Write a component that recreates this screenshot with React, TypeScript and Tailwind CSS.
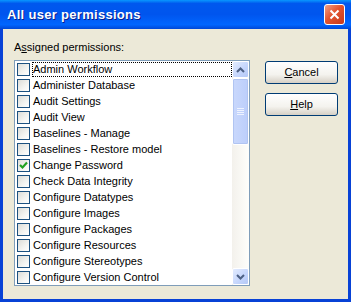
import { type ReactNode } from 'react';

const permissions = [
    'Admin Workflow',
    'Administer Database',
    'Audit Settings',
    'Audit View',
    'Baselines - Manage',
    'Baselines - Restore model',
    'Change Password',
    'Check Data Integrity',
    'Configure Datatypes',
    'Configure Images',
    'Configure Packages',
    'Configure Resources',
    'Configure Stereotypes',
    'Configure Version Control',
];

const checked = ['Change Password'];

// XP style checkbox
const CheckBox = ({ on }: { on: boolean }) => (
    <div className="w-[13px] h-[13px] shrink-0 border border-[#1c5180] bg-[linear-gradient(135deg,#dcdcd7_0%,#f4f4f1_60%,#ffffff_100%)] flex items-center justify-center">
        {on && (
            <svg width="9" height="9" viewBox="0 0 9 9">
                <path d="M1 4 L3.5 6.5 L8 1.5" fill="none" stroke="#21a121" strokeWidth="2.2" />
            </svg>
        )}
    </div>
);

const XpButton = ({ children }: { children: ReactNode }) => (
    <div className="w-[73px] h-[23px] rounded-[3px] border border-[#003c74] bg-[linear-gradient(to_bottom,#ffffff_0%,#f4f3ee_60%,#d6d0c5_100%)] flex items-center justify-center text-[11px] text-black">
        {children}
    </div>
);

const ScrollArrow = ({ up }: { up: boolean }) => (
    <div className="w-[17px] h-[17px] rounded-[2px] border border-white bg-[linear-gradient(135deg,#e2ebfe_0%,#c4d5fc_60%,#b4c8f6_100%)] flex items-center justify-center">
        <svg width="9" height="6" viewBox="0 0 9 6">
            <path d={up ? 'M1 5 L4.5 1.5 L8 5' : 'M1 1 L4.5 4.5 L8 1'} fill="none" stroke="#4d6185" strokeWidth="2" />
        </svg>
    </div>
);

export default function App() {
    return (
        <div className="w-[351px] h-[302px] flex flex-col bg-[#0842d6] font-['Liberation_Sans',Arial,sans-serif]">
            {/* title bar */}
            <div className="h-[29px] shrink-0 flex items-center justify-between pl-[7px] pr-[6px] bg-[linear-gradient(to_bottom,#0997ff_0%,#0058ee_12%,#0055ee_50%,#0066ff_85%,#0047d6_100%)]">
                <span className="text-white font-bold text-[13px] tracking-[0.3px] [text-shadow:1px_1px_0_#0a1e8c]">
                    All user permissions
                </span>
                <div className="w-[21px] h-[21px] rounded-[3px] border border-white bg-[linear-gradient(135deg,#f0a088_0%,#e2542f_45%,#c8381a_100%)] flex items-center justify-center">
                    <svg width="11" height="11" viewBox="0 0 11 11">
                        <path d="M1.5 1.5 L9.5 9.5 M9.5 1.5 L1.5 9.5" stroke="white" strokeWidth="2" />
                    </svg>
                </div>
            </div>

            {/* client area */}
            <div className="flex-1 mx-[3px] mb-[3px] bg-[#ece9d8] flex text-[11px] text-black">
                <div className="pl-[11px] pt-[12px] flex flex-col">
                    <div className="h-[13px] leading-[13px]">
                        A<span className="underline">s</span>signed permissions:
                    </div>
                    <div className="mt-[6px] w-[236px] h-[226px] border border-[#7f9db9] bg-white flex">
                        <div className="flex-1 flex flex-col">
                            {permissions.map((p, i) => (
                                <div key={p} className="h-[16px] flex items-center pl-[2px] gap-[2px]">
                                    <CheckBox on={checked.includes(p)} />
                                    <span
                                        className={
                                            i === 0
                                                ? 'flex-1 h-[15px] leading-[13px] border border-dotted border-black whitespace-nowrap'
                                                : 'flex-1 leading-[15px] pl-[1px] whitespace-nowrap overflow-hidden'
                                        }
                                    >
                                        {p}
                                    </span>
                                </div>
                            ))}
                        </div>
                        {/* scrollbar */}
                        <div className="w-[17px] flex flex-col bg-[linear-gradient(to_right,#f3f1ec,#fefefb)]">
                            <ScrollArrow up />
                            <div className="h-[67px] rounded-[2px] border border-white bg-[linear-gradient(to_right,#c9d8fc,#bccefb)] shadow-[inset_0_0_0_1px_#b0c4f2] flex items-center justify-center">
                                <div className="flex flex-col gap-[1px]">
                                    <div className="w-[7px] h-[1px] bg-[#eef3ff]" />
                                    <div className="w-[7px] h-[1px] bg-[#eef3ff]" />
                                    <div className="w-[7px] h-[1px] bg-[#eef3ff]" />
                                    <div className="w-[7px] h-[1px] bg-[#eef3ff]" />
                                </div>
                            </div>
                            <div className="flex-1" />
                            <ScrollArrow up={false} />
                        </div>
                    </div>
                </div>

                <div className="pl-[15px] pt-[32px] flex flex-col gap-[9px]">
                    <XpButton>
                        <span className="underline">C</span>ancel
                    </XpButton>
                    <XpButton>
                        <span className="underline">H</span>elp
                    </XpButton>
                </div>
            </div>
        </div>
    );
}
